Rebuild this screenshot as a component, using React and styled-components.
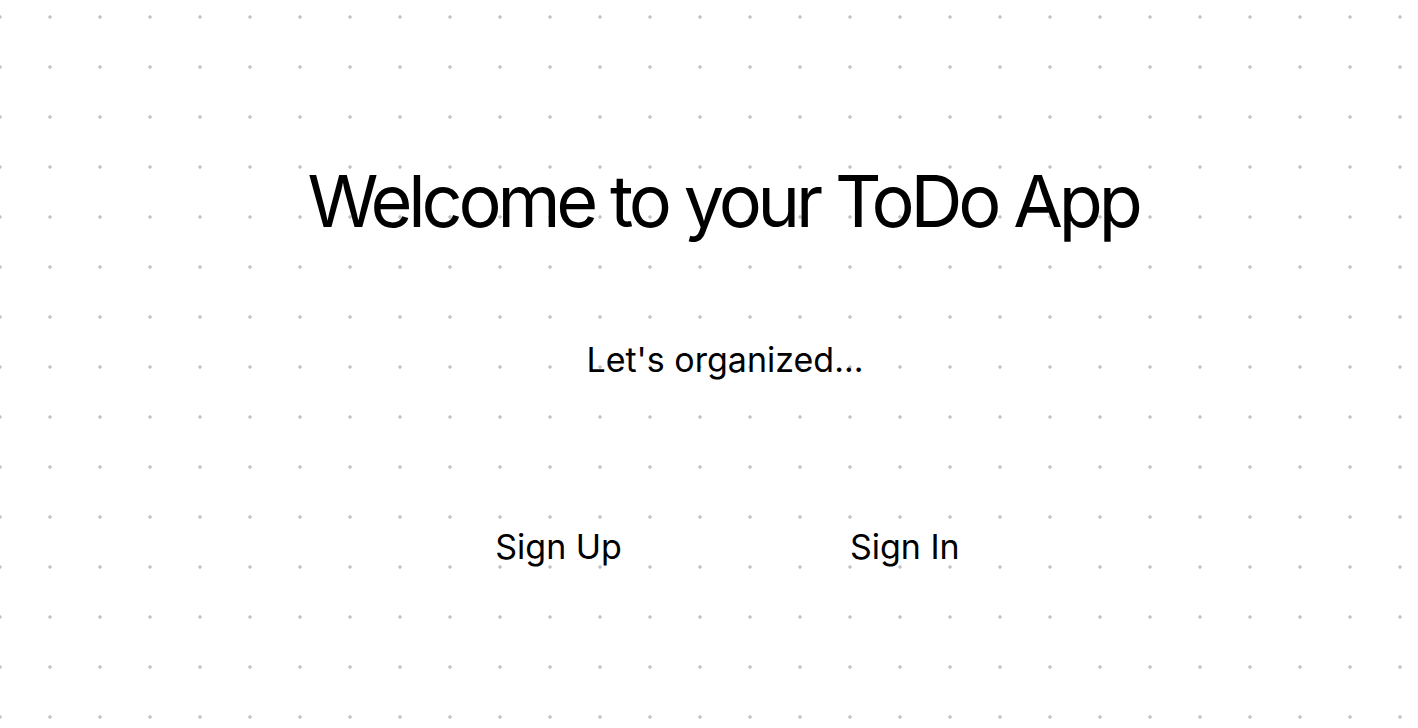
import React from "react";
import styled, {createGlobalStyle} from "styled-components";

const GlobalStyle = createGlobalStyle`
html, body {
margin: 0;
padding: 0;
}
body {
font-family: Inter, "Liberation Sans", sans-serif;
color: #000;
background-color: #fff;
background-image: radial-gradient(circle, #c4c4c4 1.5px, transparent 1.8px);
background-size: 50px 50px;
background-position: -25px -8px;
min-height: 728px;
}
`

export default function App() {
	return (
		<>
			<GlobalStyle/>
			<Page>
				<Title>Welcome to your ToDo App</Title>
				<Subtitle>Let's organized...</Subtitle>
				<Actions>
					<LinkButton>Sign Up</LinkButton>
					<LinkButton>Sign In</LinkButton>
				</Actions>
			</Page>
		</>
	)
}

const Page = styled.div`
display: flex;
flex-direction: column;
align-items: center;
padding: 158px 0 0 32px;
`
const Title = styled.h1`
margin: 0;
padding-right: 4px;
font-size: 72px;
font-weight: 400;
line-height: 1.2;
letter-spacing: -4.2px;
`
const Subtitle = styled.p`
margin: 96px 0 0;
font-size: 34px;
font-weight: 400;
line-height: 1.2;
`
const Actions = styled.div`
display: flex;
gap: 228px;
margin-top: 146px;
padding-left: 5px;
`
const LinkButton = styled.button`
background: none;
border: none;
padding: 0;
font-family: inherit;
font-size: 34px;
line-height: 1.2;
color: #000;
cursor: pointer;
`
